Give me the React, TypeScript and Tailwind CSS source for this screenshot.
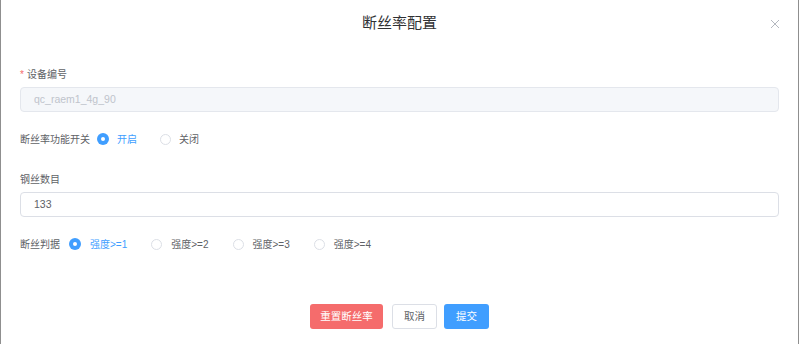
import React from 'react';

const font = { fontFamily: '"Liberation Sans", "Noto Sans CJK SC", sans-serif' };

function Radio({ label, checked, gap = 9, space = 24 }: { label: string; checked?: boolean; gap?: number; space?: number }) {
  return (
    <div className="flex items-center" style={{ marginRight: space }}>
      {checked ? (
        <span className="w-[12px] h-[12px] rounded-full bg-[#409eff] flex items-center justify-center">
          <span className="w-[4px] h-[4px] rounded-full bg-white" />
        </span>
      ) : (
        <span className="w-[11px] h-[11px] rounded-full border border-[#dcdfe6] bg-white" />
      )}
      <span className={`text-[10px] ${checked ? 'text-[#409eff]' : 'text-[#606266]'}`} style={{ marginLeft: gap }}>
        {label}
      </span>
    </div>
  );
}

export default function App() {
  return (
    <div className="w-[799px] h-[344px] bg-white border-l border-r border-[#8f8f8f] relative" style={font}>
      {/* header */}
      <div className="h-[46px] pt-[1px] flex items-center justify-center">
        <h1 className="text-[15px] text-[#303133]">断丝率配置</h1>
        <button className="absolute right-[17px] top-[18px] w-[12px] h-[12px] flex items-center justify-center text-[#b4b8bf]">
          <svg width="10" height="10" viewBox="0 0 10 10" fill="none" stroke="currentColor" strokeWidth="1">
            <path d="M1 1L9 9M9 1L1 9" />
          </svg>
        </button>
      </div>

      <div className="px-[19px]">
        {/* 设备编号 */}
        <div className="mt-[20px] h-[16px] flex items-center text-[10px] text-[#606266]">
          <span className="text-[#f56c6c] mr-[3px]">*</span>设备编号
        </div>
        <div className="mt-[5px] h-[25px] w-[759px] rounded-[4px] border border-[#e4e7ed] bg-[#f5f7fa] flex items-center px-[13px] text-[10.5px] text-[#c0c4cc]">
          qc_raem1_4g_90
        </div>

        {/* 功能开关 */}
        <div className="mt-[19px] h-[16px] flex items-center">
          <span className="text-[10px] text-[#606266] mr-[7px]">断丝率功能开关</span>
          <Radio label="开启" checked gap={8} space={23} />
          <Radio label="关闭" gap={8} />
        </div>

        {/* 钢丝数目 */}
        <div className="mt-[24px] h-[16px] flex items-center text-[10px] text-[#606266]">钢丝数目</div>
        <div className="mt-[5px] h-[25px] w-[759px] rounded-[4px] border border-[#dcdfe6] bg-white flex items-center px-[13px] text-[10.5px] text-[#606266]">
          133
        </div>

        {/* 断丝判据 */}
        <div className="mt-[19px] h-[16px] flex items-center">
          <span className="text-[10px] text-[#606266] mr-[9px]">断丝判据</span>
          <Radio label="强度>=1" checked />
          <Radio label="强度>=2" />
          <Radio label="强度>=3" />
          <Radio label="强度>=4" />
        </div>
      </div>

      {/* footer */}
      <div className="mt-[52px] flex justify-center text-[10.5px]">
        <button className="w-[73px] h-[25px] rounded-[3px] bg-[#f56c6c] text-white">重置断丝率</button>
        <button className="ml-[9px] w-[45px] h-[25px] rounded-[3px] border border-[#dcdfe6] bg-white text-[#606266]">取消</button>
        <button className="ml-[7px] w-[45px] h-[25px] rounded-[3px] bg-[#409eff] text-white">提交</button>
      </div>
    </div>
  );
}
